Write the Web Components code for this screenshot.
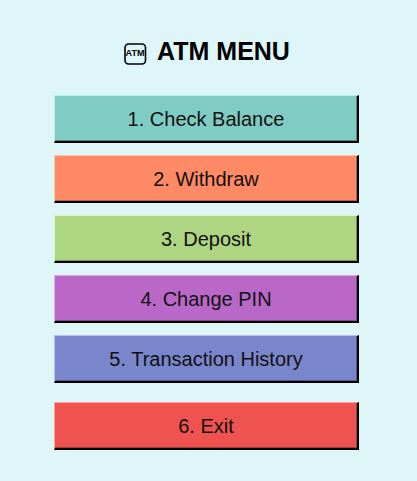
<!DOCTYPE html>
<html lang="en">
<head>
<meta charset="utf-8">
<meta name="viewport" content="width=device-width, initial-scale=1">
<title>ATM Menu</title>
<style>
  body { margin: 0; min-height: 100vh; background: #dff6f9; color: #000; font-family: "Liberation Sans", Arial, sans-serif; }
</style>
</head>
<body>
<atm-menu>
  <atm-title slot="title">ATM MENU</atm-title>
  <menu-button tone="teal">1. Check Balance</menu-button>
  <menu-button tone="orange">2. Withdraw</menu-button>
  <menu-button tone="green">3. Deposit</menu-button>
  <menu-button tone="purple">4. Change PIN</menu-button>
  <menu-button tone="indigo">5. Transaction History</menu-button>
  <menu-button slot="footer" tone="red">6. Exit</menu-button>
</atm-menu>
<script>
  class ShadowElement extends HTMLElement {
    constructor() {
      super();
      this.attachShadow({ mode: "open" }).innerHTML = this.constructor.markup;
    }
  }

  class AtmIcon extends ShadowElement {
    static markup = `
      <style>
        :host { display: block; flex: none; width: 24px; height: 24px; }
        svg { display: block; width: 100%; height: 100%; }
        text { font: bold 9px "Liberation Sans", Arial, sans-serif; }
      </style>
      <svg viewBox="0 0 24 24" aria-hidden="true">
        <rect x="2" y="2" width="20.5" height="20" rx="3.5" fill="none" stroke="#000" stroke-width="1.6"/>
        <text x="12" y="14" text-anchor="middle">ATM</text>
      </svg>`;
  }

  class AtmTitle extends ShadowElement {
    static markup = `
      <style>
        :host { display: block; }
        h1 { display: flex; align-items: center; justify-content: center; gap: 10px; margin: 0; font-size: 25px; line-height: 32px; font-weight: bold; }
        atm-icon { padding-top: 6px; }
      </style>
      <h1><atm-icon></atm-icon><span><slot></slot></span></h1>`;
  }

  class MenuButton extends ShadowElement {
    static markup = `
      <style>
        :host { display: block; --face: #80cbc4; --light: #aef3ec; --shade: #508a84; }
        :host([tone="orange"]) { --face: #ff8a65; --light: #ffc3b0; --shade: #b06048; }
        :host([tone="green"]) { --face: #aed581; --light: #dcf5c0; --shade: #789459; }
        :host([tone="purple"]) { --face: #ba68c8; --light: #e6a8f0; --shade: #80488a; }
        :host([tone="indigo"]) { --face: #7986cb; --light: #b6c0f6; --shade: #535c8c; }
        :host([tone="red"]) { --face: #ef5350; --light: #ff9f9d; --shade: #a53937; }
        button {
          display: block; box-sizing: border-box; width: 100%; margin: 0; padding: 12px 8px 10px;
          border-style: solid; border-width: 1px 2px 2px 1px; border-color: var(--light) #000 #000 var(--light); border-radius: 0;
          background: var(--face); box-shadow: inset -1px -1px var(--shade);
          color: #111; font: 20px/23px "Liberation Sans", Arial, sans-serif; text-align: center; cursor: pointer;
        }
      </style>
      <button type="button"><slot></slot></button>`;
  }

  class AtmMenu extends ShadowElement {
    static markup = `
      <style>
        :host { display: block; padding: 35px 58px 32px 54px; }
        nav { display: grid; gap: 12px; margin-top: 28px; }
        footer { margin-top: 19px; }
      </style>
      <slot name="title"></slot>
      <nav aria-label="ATM menu"><slot></slot></nav>
      <footer><slot name="footer"></slot></footer>`;
  }

  customElements.define("atm-icon", AtmIcon);
  customElements.define("atm-title", AtmTitle);
  customElements.define("menu-button", MenuButton);
  customElements.define("atm-menu", AtmMenu);
</script>
</body>
</html>
